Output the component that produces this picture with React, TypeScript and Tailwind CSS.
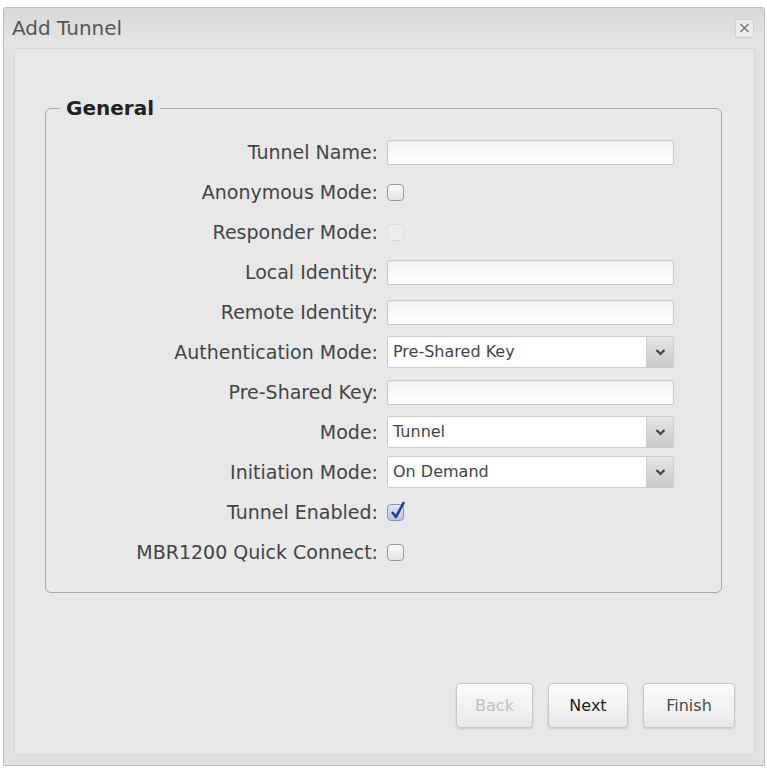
import { ReactNode } from "react";

const FONT = { fontFamily: '"DejaVu Sans", Verdana, sans-serif' };

function TextBox() {
  return (
    <div className="w-[287px] h-[25px] rounded-[2px] border border-[#c9c9c9] bg-gradient-to-b from-[#f4f4f4] to-white shadow-[inset_0_1px_1px_rgba(0,0,0,0.06)]" />
  );
}

function Select({ value }: { value: string }) {
  return (
    <div className="w-[287px] h-[32px] flex rounded-[2px] border border-[#cdcdcd] bg-white overflow-hidden">
      <div className="flex-1 flex items-center pl-[5px] text-[16px] text-[#444]">{value}</div>
      <div className="w-[27px] flex items-center justify-center bg-gradient-to-b from-[#e6e6e6] to-[#c9c9c9] border-l border-[#d0d0d0]">
        <svg width="11" height="8" viewBox="0 0 11 8">
          <path d="M1.5 2 L5.5 6 L9.5 2" fill="none" stroke="#444" strokeWidth="2.2" />
        </svg>
      </div>
    </div>
  );
}

function Check({ checked, disabled }: { checked?: boolean; disabled?: boolean }) {
  return (
    <div
      className={`relative w-[17px] h-[17px] rounded-[4px] border ${
        disabled
          ? "border-[#dcdcdc] bg-[#ececec]"
          : checked
          ? "border-[#8a94a8] bg-gradient-to-b from-[#dfe6f2] to-[#b9c6dc]"
          : "border-[#9c9c9c] bg-gradient-to-b from-[#fafafa] to-[#e2e2e2]"
      }`}
    >
      {checked && (
        <svg className="absolute -top-[5px] left-[1px]" width="18" height="20" viewBox="0 0 18 20">
          <path d="M3 12 L7 17 L15 2" fill="none" stroke="#1f3f8f" strokeWidth="2.6" strokeLinejoin="round" />
        </svg>
      )}
    </div>
  );
}

function Row({ label, children }: { label: string; children: ReactNode }) {
  return (
    <div className="h-[40px] flex items-center">
      <div className="w-[332px] text-right text-[19px] text-[#444]">{label}</div>
      <div className="ml-[9px] flex items-center">{children}</div>
    </div>
  );
}

function Button({ label, width, tone }: { label: string; width: string; tone: "off" | "dark" | "mid" }) {
  const color = tone === "off" ? "text-[#c2c2c2]" : tone === "dark" ? "text-[#222]" : "text-[#4a4a4a]";
  return (
    <button
      className={`h-[45px] ${width} rounded-[4px] border border-[#c8c8c8] bg-gradient-to-b from-[#fbfbfb] to-[#e9e9e9] shadow-[0_1px_2px_rgba(0,0,0,0.15)] text-[16px] ${color}`}
    >
      {label}
    </button>
  );
}

export default function App() {
  return (
    <div className="w-[767px] h-[768px] bg-white pt-[7px] pl-[3px]" style={FONT}>
      <div className="w-[762px] h-[759px] flex flex-col rounded-t-[3px] border border-[#bdbdbd] bg-[#e1e1e1]">
        <div className="h-[40px] flex items-center justify-between pl-[8px] pr-[10px] bg-gradient-to-b from-[#d9d9d9] to-[#e6e6e6]">
          <span className="text-[20px] text-[#555]">Add Tunnel</span>
          <span className="w-[19px] h-[19px] flex items-center justify-center rounded-[2px] border border-[#d2d2d2] bg-[#ececec] text-[16px] leading-none text-[#777]">
            ×
          </span>
        </div>

        <div className="ml-[10px] mr-[9px] mb-[10px] flex-1 flex flex-col border border-[#d6d6d6] bg-[#e8e8e8]">
          <fieldset className="mt-[47px] ml-[30px] mr-[32px] rounded-[6px] border border-[#a9a9a9] pl-0 pr-0 pt-[12px] pb-[20px]">
            <legend className="ml-[14px] px-[6px] h-[24px] leading-[24px] text-[20px] font-bold text-[#222]">General</legend>
            <Row label="Tunnel Name:"><TextBox /></Row>
            <Row label="Anonymous Mode:"><Check /></Row>
            <Row label="Responder Mode:"><Check disabled /></Row>
            <Row label="Local Identity:"><TextBox /></Row>
            <Row label="Remote Identity:"><TextBox /></Row>
            <Row label="Authentication Mode:"><Select value="Pre-Shared Key" /></Row>
            <Row label="Pre-Shared Key:"><TextBox /></Row>
            <Row label="Mode:"><Select value="Tunnel" /></Row>
            <Row label="Initiation Mode:"><Select value="On Demand" /></Row>
            <Row label="Tunnel Enabled:"><Check checked /></Row>
            <Row label="MBR1200 Quick Connect:"><Check /></Row>
          </fieldset>

          <div className="mt-auto mb-[26px] mr-[19px] flex justify-end gap-[15px]">
            <Button label="Back" width="w-[77px]" tone="off" />
            <Button label="Next" width="w-[80px]" tone="dark" />
            <Button label="Finish" width="w-[92px]" tone="mid" />
          </div>
        </div>
      </div>
    </div>
  );
}
